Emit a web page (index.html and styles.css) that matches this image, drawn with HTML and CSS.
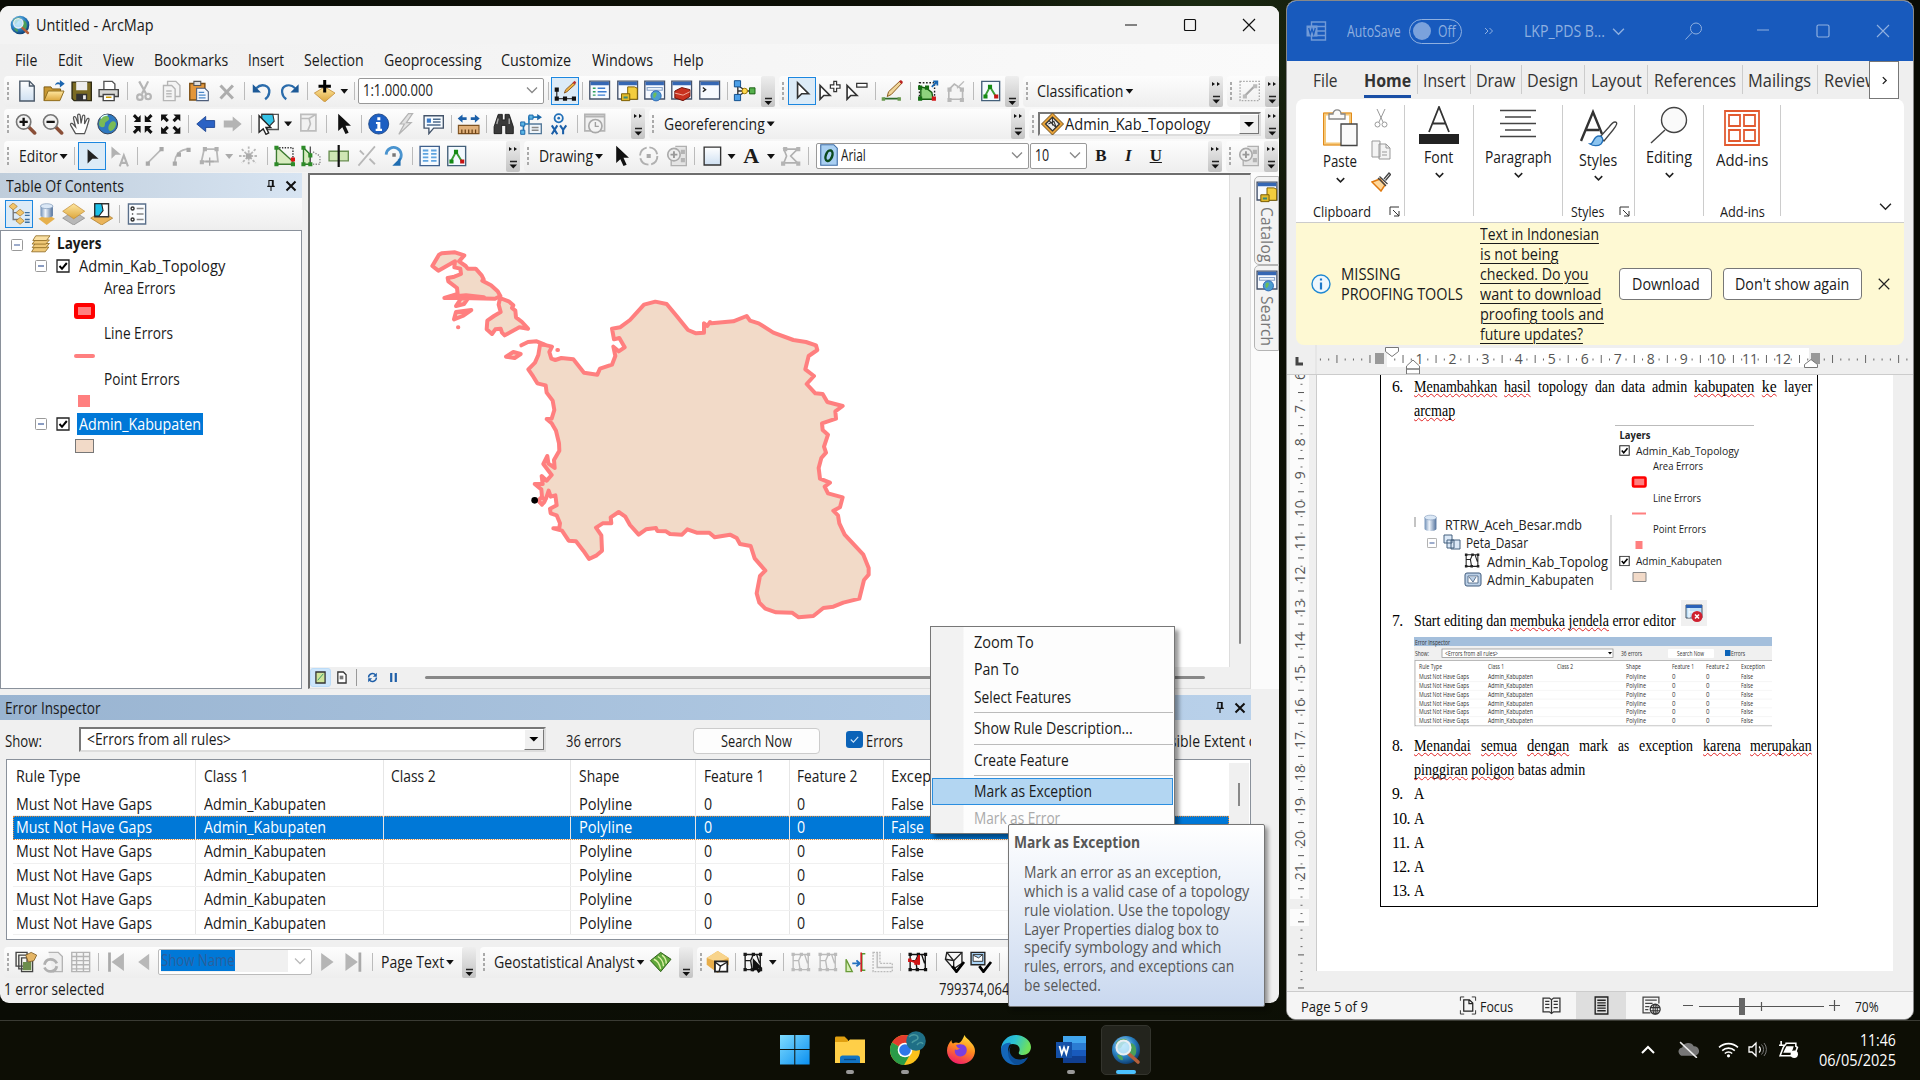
FILE: index.html
```html
<!DOCTYPE html>
<html lang="en">
<head>
<meta charset="utf-8">
<title>Desktop</title>
<link rel="stylesheet" href="styles.css">
</head>
<body>
<svg class="sprite" aria-hidden="true">
<defs>
<linearGradient id="gy" x1="0" y1="0" x2="0" y2="1"><stop offset="0" stop-color="#ffe7a0"/><stop offset="1" stop-color="#dca63c"/></linearGradient>
<linearGradient id="gb" x1="0" y1="0" x2="1" y2="1"><stop offset="0" stop-color="#7fdcff"/><stop offset="1" stop-color="#0a8ff0"/></linearGradient>
<linearGradient id="gw" x1="0" y1="0" x2="0" y2="1"><stop offset="0" stop-color="#fff"/><stop offset="1" stop-color="#cfe0f2"/></linearGradient>
<linearGradient id="gc" x1="0" y1="0" x2="1" y2="0"><stop offset="0" stop-color="#6d8db5"/><stop offset=".4" stop-color="#eef4fb"/><stop offset="1" stop-color="#4f6f9a"/></linearGradient>
<radialGradient id="gl" cx=".4" cy=".35" r=".7"><stop offset="0" stop-color="#cdeeff"/><stop offset=".55" stop-color="#2b83c4"/><stop offset="1" stop-color="#0b3566"/></radialGradient>
<linearGradient id="gf" x1=".7" y1="0" x2=".3" y2="1"><stop offset="0" stop-color="#ffe13a"/><stop offset=".45" stop-color="#ff8a1f"/><stop offset="1" stop-color="#f0196b"/></linearGradient>
<linearGradient id="ge" x1="0" y1="0" x2="1" y2=".3"><stop offset="0" stop-color="#1fa4e0"/><stop offset=".5" stop-color="#2cc3d2"/><stop offset="1" stop-color="#6fe05a"/></linearGradient>
</defs>
<symbol id="new" viewBox="0 0 16 16"><path d="M3 .8h7l3.500 3.500v11H3z" fill="url(#gw)" stroke="#4a5868"/><path d="M10 .8v3.600h3.500" fill="none" stroke="#4a5868"/></symbol>
<symbol id="open" viewBox="0 0 16 16"><path d="M1 15V5h5l1 1.500h6V9" fill="#c79732" stroke="#7c5a12" stroke-width=".7"/><path d="M1 15l3-7h11.500l-3 7z" fill="url(#gy)" stroke="#8d6a1c" stroke-width=".7"/><path d="M9 4c0-2 2-3 3.500-2V0L16 2.800 12.500 5.500v-2C11 3 9.800 3 9 4" fill="#1c66b0"/></symbol>
<symbol id="save" viewBox="0 0 16 16"><path d="M1 1.500h14v13.500H2.500L1 13.500z" fill="#7a6a23" stroke="#2f2b14"/><path d="M4 1.500h8v6H4z" fill="#eee"/><path d="M4 10h8v5H4z" fill="#333"/><path d="M9 11h2v3H9z" fill="#eee"/></symbol>
<symbol id="print" viewBox="0 0 16 16"><path d="M4.500 7V1h6l2 2v4" fill="#fff" stroke="#555"/><path d="M1 7h14v5H1z" fill="#d8d8d4" stroke="#444"/><path d="M4 10.500h8V15H4z" fill="#fff" stroke="#444"/><path d="M6 12.500h4" stroke="#c90"/></symbol>
<symbol id="cut" viewBox="0 0 16 16"><g fill="none" stroke="#b5b5b5" stroke-width="1.600"><path d="M4 1l5 9M10.500 1L6 10"/><circle cx="4.500" cy="12.500" r="2"/><circle cx="10.500" cy="12" r="2"/></g></symbol>
<symbol id="copy" viewBox="0 0 16 16"><g fill="#f4f4f4" stroke="#b5b5b5"><path d="M5 1h6l3 3v8H5z"/><path d="M2 4h6l2.500 2.500V15H2z"/></g><path d="M4 8h4M4 10h4M4 12h4" stroke="#bbb"/></symbol>
<symbol id="paste" viewBox="0 0 16 16"><path d="M1.500 2.500h11v12h-11z" fill="#e3963a" stroke="#7b4d12"/><path d="M4.500 1h5v3h-5z" fill="#ddd" stroke="#555" stroke-width=".8"/><path d="M6.500 6h6L15 8.500V15H6.500z" fill="#f4f8ff" stroke="#4d5d7a" stroke-width=".8"/><path d="M8 9h4M8 11h5M8 13h5" stroke="#4a86c8" stroke-width=".9"/></symbol>
<symbol id="del" viewBox="0 0 16 16"><path d="M3.500 4l9 9.500M12.500 4l-9 9.500" stroke="#adadad" stroke-width="2.200"/></symbol>
<symbol id="undo" viewBox="0 0 16 16"><path d="M4 6c4-4 10-2 9.500 3-.2 2-1 3.500-3 5" fill="none" stroke="#2b6cab" stroke-width="1.700"/><path d="M1.500 3v6h6z" fill="#1d5a98"/></symbol>
<symbol id="redo" viewBox="0 0 16 16"><path d="M12 6c-4-4-10-2-9.500 3 .2 2 1 3.500 3 5" fill="none" stroke="#2b6cab" stroke-width="1.600"/><path d="M14.500 3v6h-6z" fill="#1d5a98"/></symbol>
<symbol id="add" viewBox="0 0 16 16"><path d="M8 5l7.500 4.500L8 16 .5 9.500z" fill="url(#gy)" stroke="#c58f3a" stroke-width=".6"/><path d="M8 0v9M3.500 4.500h9" stroke="#000" stroke-width="2.200"/></symbol>
<symbol id="edit" viewBox="0 0 16 16"><path d="M1.500 7v6.500h12" fill="none" stroke="#444"/><g fill="#111"><path d="M0 5.500h3v3H0zM0 12h3v3H0zM6 12h3v3H6zM12.500 12h3v3h-3z"/></g><path d="M7 9.500l1-2.500 6-5.500 1 1.500-6 5.500z" fill="#f0b440" stroke="#7c4b1b" stroke-width=".6"/><path d="M13 2l1.500-1.500 1.200 1.300-1.500 1.500z" fill="#b33"/></symbol>
<symbol id="win" viewBox="0 0 16 16"><path d="M.8.800h14.400v13H.8z" fill="#f7faff" stroke="#46536b"/><path d="M1.300 1.300h13.400v2.500H1.300z" fill="#3567b4"/></symbol>
<symbol id="toc" viewBox="0 0 16 16"><use href="#win"/><path d="M3 6h2M3 8.500h2M3 11h2" stroke="#2fa060"/><path d="M6.500 6H12M6.500 8.500H13M6.500 11H12" stroke="#3a7bd0"/></symbol>
<symbol id="cat" viewBox="0 0 16 16"><use href="#win"/><path d="M8 5h5l2 1v8H8z" fill="#f3cd3e" stroke="#7a5c00" stroke-width=".7"/><path d="M3.500 10h6v5h-6z" fill="#e0b92b" stroke="#7a5c00" stroke-width=".7"/><path d="M5 12h3v1.500H5z" fill="#3a8a7a"/></symbol>
<symbol id="srch" viewBox="0 0 16 16"><use href="#win"/><path d="M2.500 5.500h11v2h-11z" fill="#eef4fb" stroke="#8aa4c8" stroke-width=".8"/><circle cx="9" cy="11.500" r="3.700" fill="#4b9dd0" stroke="#2e68b5" stroke-width=".7"/><path d="M7 10c2-2 3 0 2 1.500s-1 2-2 1z" fill="#6cbd5a"/></symbol>
<symbol id="tbox" viewBox="0 0 16 16"><use href="#win"/><path d="M3 8l5-2.500 6 1.500v5l-5 3-6-2z" fill="#c8311f" stroke="#6d1209" stroke-width=".7"/><path d="M3 9.500l6 1.500 5-2.500" stroke="#f2b0a0" fill="none" stroke-width=".7"/></symbol>
<symbol id="py" viewBox="0 0 16 16"><use href="#win"/><path d="M3 5.500l2 1.500L3 8.500" fill="none" stroke="#222"/></symbol>
<symbol id="model" viewBox="0 0 16 16"><path d="M3 3v10M3 8h10M3 4l6 4M3 12l6-4" stroke="#333" fill="none"/><path d="M.5.500h4.500V5H.5zM.5 10.500h4.500V15H.5z" fill="#4da0e8" stroke="#114e8a" stroke-width=".7"/><circle cx="8" cy="8" r="2" fill="#ffd94d" stroke="#9a7400" stroke-width=".7"/><path d="M11.500 5.700h4v4.400h-4z" fill="#55b04c" stroke="#1c6016" stroke-width=".7"/></symbol>
<symbol id="arw" viewBox="0 0 16 16"><path d="M5 2v11l3-3h5z" fill="#fff" stroke="#333" stroke-width="1.200"/></symbol>
<symbol id="arwp" viewBox="0 0 16 16"><path d="M1 4v10l2.700-2.700h4.500z" fill="#fff" stroke="#333" stroke-width="1.200"/><path d="M11 1h2v2.500h2.500v2.500H13V8.500h-2V6H8.500V3.500H11z" fill="#fff" stroke="#333" stroke-width=".9"/></symbol>
<symbol id="arwm" viewBox="0 0 16 16"><path d="M1 4v10l2.700-2.700h4.500z" fill="#fff" stroke="#333" stroke-width="1.200"/><path d="M8 2.500h7.500v2.600H8z" fill="#fff" stroke="#333" stroke-width=".9"/></symbol>
<symbol id="pen" viewBox="0 0 16 16"><path d="M1 13.500h12" stroke="#2f6b2c" stroke-width="1.200"/><path d="M4 12l1-3.500 8-7.500 1.500 1.500-7.500 8z" fill="#f0d59a" stroke="#8a5a1b" stroke-width=".7"/><path d="M12.500 1l1.500-1 1.500 1.500-1 1.500z" fill="#b22"/><path d="M0 12.500h2.500v2.500H0zM11.500 12.500H14v2.500h-2.500z" fill="#6a9a50"/></symbol>
<symbol id="topo" viewBox="0 0 16 16"><path d="M2 2h11v12H2z" fill="none" stroke="#222" stroke-dasharray="1.200 1.200"/><path d="M3 5l4 1 4 3 1 5H3z" fill="#8ed27d" stroke="#155c10"/><path d="M1 4h3v3H1zM6 4h3v3H6zM1 12h3v3H1z" fill="#146c12"/><path d="M11 12h3v3h-3z" fill="#d01818"/><path d="M11 5l4-4m-3 0h3v3" stroke="#1564b0" fill="none" stroke-width="1.300"/></symbol>
<symbol id="dtopo" viewBox="0 0 16 16"><path d="M3 14V7l4-4 6 4v7z" fill="#f4f4f4" stroke="#b8b8b8" stroke-width="1.200"/><path d="M9 6l5-5" stroke="#bbb"/><path d="M2 13h3v3H2zM11 13h3v3h-3zM2 5.500h3v3H2zM11 5.500h3v3h-3z" fill="#b8b8b8"/></symbol>
<symbol id="tri" viewBox="0 0 16 16"><path d="M1.500 1h13v14h-13z" fill="#f4faff" stroke="#44607a"/><path d="M4 11.500L7.500 5l4 6.500" fill="none" stroke="#3a9d35" stroke-width="1.400"/><path d="M2.700 10.500h3v3h-3zM6 3.500h3v3H6z" fill="#148a14"/><path d="M10.500 10.500h3v3h-3z" fill="#c81414"/></symbol>
<symbol id="line" viewBox="0 0 16 16"><path d="M3 13L13 3" stroke="#b8b8b8" stroke-width="1.200"/><path d="M1.500 12h3v3h-3zM11.500 1.500h3v3h-3z" fill="#a8a8a8"/></symbol>
<symbol id="dline" viewBox="0 0 16 16"><path d="M1 1h14v14H1z" fill="none" stroke="#aaa" stroke-dasharray="1.200 1"/><path d="M4 12l8-8" stroke="#a8a8a8" stroke-width="1.500"/><path d="M3 10.500h3v3H3zM10.500 3h3v3h-3z" fill="#bbb"/></symbol>
<symbol id="curve" viewBox="0 0 16 16"><path d="M3 13C3 7 7 3 13 3" fill="none" stroke="#b8b8b8" stroke-width="1.200"/><path d="M1.500 12h3v3h-3zM11.500 2h3v3h-3zM4.500 5.500h3v3h-3z" fill="#a8a8a8"/></symbol>
<symbol id="dpoly" viewBox="0 0 16 16"><path d="M4 3h9l1 9H2z" fill="none" stroke="#b8b8b8" stroke-width="1.300"/><path d="M3 1.500h3v3H3zM11.500 1.500h3v3h-3zM.8 11h3v3h-3z" fill="#b0b0b0"/><path d="M8 9v6M5 12h6" stroke="#aaa"/></symbol>
<symbol id="burst" viewBox="0 0 16 16"><path d="M8 1v14M1 8h14M3 3l10 10M13 3L3 13" stroke="#b8b8b8" stroke-width="1.300" stroke-dasharray="1.800 1"/><path d="M6 6h4v4H6z" fill="#aaa"/></symbol>
<symbol id="zin" viewBox="0 0 16 16"><path d="M10 10l4.500 4.500" stroke="#8a4f38" stroke-width="2.600" stroke-linecap="round"/><circle cx="6.500" cy="6.500" r="5.200" fill="#f2f2f2" stroke="#777" stroke-width="1.200"/><path d="M6.500 3.500v6M3.500 6.500h6" stroke="#111" stroke-width="1.700"/></symbol>
<symbol id="zout" viewBox="0 0 16 16"><path d="M10 10l4.500 4.500" stroke="#8a4f38" stroke-width="2.600" stroke-linecap="round"/><circle cx="6.500" cy="6.500" r="5.200" fill="#f2f2f2" stroke="#777" stroke-width="1.200"/><path d="M3.500 6.500h6" stroke="#111" stroke-width="1.700"/></symbol>
<symbol id="hand" viewBox="0 0 16 16"><path d="M5 15L1.500 9c-.8-1.500 1-2 1.800-.8L5 10 3.500 4c-.3-1.600 1.200-2 1.800-.4L7 8 6.500 2c0-1.600 1.700-1.600 1.900 0L9 7.500l1-5c.4-1.500 1.800-1.200 1.700.3L11.500 8l1.700-3.500c.7-1.200 2-.6 1.500.8L13 11l-1.500 4z" fill="#fff" stroke="#555" stroke-width=".9"/></symbol>
<symbol id="globe" viewBox="0 0 16 16"><circle cx="8" cy="8" r="7.200" fill="#2e78c0" stroke="#333f52" stroke-width=".7"/><path d="M4 3c2-2 5-1 5 1S6 6 6 8s-1 3-3 2-1.500-5 1-7M10 7c2-2 4-1 4 1s-2 5-4 5-2-4 0-6" fill="#79bb55"/><path d="M3 4c1-2 3-2.500 5-2.500" stroke="#dff" fill="none"/></symbol>
<symbol id="fin" viewBox="0 0 16 16"><g fill="#111"><path d="M6.500 1.500v5h-5l1.700-1.700L.8 2.400 2.400.8l2.400 2.400zM9.500 1.500v5h5l-1.700-1.700 2.400-2.400L13.600.8l-2.400 2.400zM6.500 14.500v-5h-5l1.700 1.700-2.400 2.400 1.600 1.600 2.400-2.400zM9.500 14.500v-5h5l-1.700 1.700 2.400 2.400-1.600 1.600-2.400-2.400z"/></g></symbol>
<symbol id="fout" viewBox="0 0 16 16"><g fill="#111"><path d="M1 6V1h5L4.300 2.700l2.400 2.400-1.600 1.600-2.400-2.400zM15 6V1h-5l1.700 1.700-2.400 2.400 1.600 1.600 2.400-2.400zM1 10v5h5l-1.700-1.700 2.400-2.400-1.600-1.600-2.400 2.400zM15 10v5h-5l1.700-1.700-2.400-2.400 1.600-1.600 2.400 2.400z"/></g></symbol>
<symbol id="back" viewBox="0 0 16 16"><path d="M1.500 8L8 2.500v3h6.500v5H8v3z" fill="#2b62c4" stroke="#163f8d" stroke-width=".6"/></symbol>
<symbol id="fwd" viewBox="0 0 16 16"><path d="M14.500 8L8 2.500v3H1.500v5H8v3z" fill="#b4b4b4"/></symbol>
<symbol id="selp" viewBox="0 0 16 16"><path d="M3 1h12v11H3z" fill="#fff" stroke="#555"/><path d="M3 1h8l1 5-5 5H3z" fill="#35c3e6" stroke="#333" stroke-width=".8"/><path d="M1 2v12l3-2.500 2 4 2-1-2-4h3.500z" fill="#fff" stroke="#222"/></symbol>
<symbol id="clr" viewBox="0 0 16 16"><path d="M3 1h11v12H3zM3 4h6l1 4-2 5M9 4l5-3" fill="#f2f2f2" stroke="#bdbdbd" stroke-width="1.200"/></symbol>
<symbol id="ptr" viewBox="0 0 16 16"><path d="M4 .5v12.500l3-2.700 2.300 5 2.300-1-2.300-5h4z" fill="#111"/></symbol>
<symbol id="info" viewBox="0 0 16 16"><circle cx="8" cy="8" r="7.300" fill="#1d5fc2" stroke="#153f80" stroke-width=".6"/><path d="M7 3h2.200v2.200H7zM6 6.500h3.200v5h1.200V13H5.800v-1.500H7V8H6z" fill="#fff"/></symbol>
<symbol id="bolt" viewBox="0 0 16 16"><path d="M10 .5L4 8h3l-4 7.500L12 7H8.500L13 .5z" fill="#e2e2e2" stroke="#b4b4b4" stroke-width=".9"/></symbol>
<symbol id="pop" viewBox="0 0 16 16"><path d="M1 2h14v9H8l-3.500 4v-4H1z" fill="#f6fbff" stroke="#44546a"/><path d="M3 4h3v3H3z" fill="#3a7bc8"/><path d="M7.500 4.500H13M7.500 6.500H13M3 8.700h10" stroke="#4d6b8d"/></symbol>
<symbol id="meas" viewBox="0 0 16 16"><path d="M0 4l3.500-3v2h3v2h-3v2zM16 4l-3.500-3v2h-3v2h3v2z" fill="#1b5fa8"/><path d="M.5 9h15v6H.5z" fill="#e0b07a" stroke="#7d5120" stroke-width=".8"/><path d="M3 12v3M5.500 12v3M8 12v3M10.500 12v3M13 12v3" stroke="#6b4216" stroke-width=".9"/></symbol>
<symbol id="bino" viewBox="0 0 16 16"><path d="M4 1h3v4h2V1h3l3 9v5H9.500V9h-3v6H1v-5z" fill="#3a3a3a" stroke="#111" stroke-width=".6"/><path d="M3 8l1-4M12 8V4" stroke="#aaa"/></symbol>
<symbol id="route" viewBox="0 0 16 16"><path d="M2 14V8h4V3h7" fill="none" stroke="#1f7ab8" stroke-width="1.200"/><path d="M12 .8L15.500 3 12 5.200z" fill="#1b66a8"/><path d="M0 6.500h3v3H0zM0 12.500h3v3H0zM6 1.500h3v3H6z" fill="#5bb5e5" stroke="#1b66a8" stroke-width=".7"/><path d="M6 8h9v7H6z" fill="#eef5fb" stroke="#557a9a"/><path d="M8 10.500h5M8 12.500h5" stroke="#888"/></symbol>
<symbol id="xy" viewBox="0 0 16 16"><circle cx="8" cy="3.800" r="3" fill="none" stroke="#2270b8" stroke-width="1.300"/><circle cx="8" cy="3.800" r="1" fill="#2270b8"/><path d="M3 9l4 6.500M7 9l-4 6.500M9 9l2.200 3.200V15.500M13.500 9l-2.300 3.200" stroke="#1b5fa8" stroke-width="1.500" fill="none"/></symbol>
<symbol id="time" viewBox="0 0 16 16"><path d="M.8 1h14.400v12H.8z" fill="#f0f0f0" stroke="#b4b4b4" stroke-width="1.200"/><path d="M1 2.500h14" stroke="#b4b4b4" stroke-width="1.500"/><circle cx="8.500" cy="9.500" r="4.800" fill="#f3f3f3" stroke="#a8a8a8" stroke-width="1.200"/><path d="M8.500 6.500v3.200h2.500" stroke="#a0a0a0" fill="none"/></symbol>
<symbol id="eptr" viewBox="0 0 16 16"><path d="M5 3v10.500l3.500-3.500H13z" fill="#222"/></symbol>
<symbol id="eptra" viewBox="0 0 16 16"><path d="M2 1v9l3-3h4z" fill="#b2b2b2"/><path d="M8 15.500l3-8 3 8M9 13h4" stroke="#b2b2b2" stroke-width="1.500" fill="none"/></symbol>
<symbol id="ev" viewBox="0 0 16 16"><path d="M2 2v12h12V12L3 2z" fill="#d8ecc0" stroke="#3c7a30"/><path d="M4 2h10v9" fill="none" stroke="#333" stroke-dasharray="1 1"/><path d="M.5.500h3v3h-3zM.5 12.500h3v3h-3zM12.500 12.500h3v3h-3z" fill="#2d8a28"/><path d="M12.500 9h3v3h-3z" fill="#d11"/></symbol>
<symbol id="resh" viewBox="0 0 16 16"><path d="M2 2v12h5V7z" fill="#d8ecc0" stroke="#2d7a28"/><path d="M7 1v14" stroke="#555"/><path d="M9 5l5 3v6H9" fill="none" stroke="#888" stroke-dasharray="1 1"/><path d="M.5.500h3v3h-3zM.5 12.500h3v3h-3zM5.500 6h3v3h-3zM5.500 12.500h3v3h-3z" fill="#2d8a28"/></symbol>
<symbol id="split" viewBox="0 0 16 16"><path d="M1 4.500h14v7H1z" fill="#cfe6b4" stroke="#6a8f52"/><path d="M8 0v16" stroke="#111" stroke-width="1.600"/></symbol>
<symbol id="xline" viewBox="0 0 16 16"><path d="M2 15L14 1M3 4l3 3M10 10l4 4" stroke="#b8b8b8" stroke-width="1.300"/></symbol>
<symbol id="rot" viewBox="0 0 16 16"><path d="M2.500 7a5.500 5.500 0 1 1 9 4.500" fill="none" stroke="#4a94cf" stroke-width="2"/><path d="M13 9v6H7z" fill="#1e6cb0"/><path d="M7 6h2.500v2.500H7z" fill="#777"/></symbol>
<symbol id="attr" viewBox="0 0 16 16"><path d="M1 1h14v14H1z" fill="#f5faff" stroke="#3e5f8c"/><path d="M3 4h4M3 6.500h4M3 9h4M3 11.500h4M9 4h4M9 6.500h4M9 9h4M9 11.500h4" stroke="#5fa4e0" stroke-width="1.300"/></symbol>
<symbol id="drot" viewBox="0 0 16 16"><circle cx="8" cy="8" r="6.300" fill="none" stroke="#b0b0b0" stroke-width="1.400" stroke-dasharray="8 2"/><path d="M6.500 6.500h3v3h-3z" fill="#aaa"/></symbol>
<symbol id="dz" viewBox="0 0 16 16"><path d="M7 1h8v14H4V8" fill="#e4e4e4" stroke="#b0b0b0"/><path d="M11 3.500h3v3h-3zM11 9.500h3v3h-3z" fill="#b4b4b4"/><circle cx="6" cy="7" r="4.500" fill="#eee" stroke="#aaa" stroke-width="1.200"/><path d="M6 4.500v5M3.500 7h5" stroke="#999" stroke-width="1.400"/></symbol>
<symbol id="rect" viewBox="0 0 16 16"><path d="M2.500 1.500h12v13h-12z" fill="url(#gw)" stroke="#333"/></symbol>
<symbol id="nodes" viewBox="0 0 16 16"><path d="M3 3h10L8 8l5 5H3l2-5z" fill="none" stroke="#b0b0b0" stroke-width="1.200"/><path d="M2.500 1.500h3v3h-3zM12 1.500h3v3h-3zM12 12h3v3h-3zM1 12h3v3H1z" fill="#b4b4b4"/></symbol>
<symbol id="fontf" viewBox="0 0 16 16"><path d="M2 .5h9.500l2.500 2.500v12.500H2z" fill="#a9cff2" stroke="#3d6ca5" stroke-width=".8"/><ellipse cx="8" cy="8.500" rx="2.300" ry="4" transform="rotate(20 8 8.500)" fill="none" stroke="#0b4a1d" stroke-width="1.800"/></symbol>
<symbol id="topl" viewBox="0 0 16 16"><path d="M8 0l8 8-8 8-8-8z" fill="#e7a238" stroke="#6b4a18" stroke-width=".7"/><path d="M8 3l5 5-5 5-5-5z" fill="#eee" stroke="#333"/><path d="M5.500 5.500l5 5M8 3v6M5 8l4-2 1.500 4" stroke="#333" stroke-width=".8" fill="none"/></symbol>
<symbol id="l1" viewBox="0 0 16 16"><path d="M4 4v8h5M4 7h5" stroke="#777" fill="none"/><path d="M4 0l3 2.500L4 5 1 2.500zM9 4.500l3 2.500-3 2.500L6 7zM9 10.500l3 2.500-3 2.500-3-2.500z" fill="#f1c56b" stroke="#a87824" stroke-width=".5"/><path d="M12.500 7H16M12.500 9H16M12.500 12H16M12.500 14H16" stroke="#3b6fa0"/></symbol>
<symbol id="cyl" viewBox="0 0 16 16"><path d="M3 3v9.500c0 2.500 10 2.500 10 0V3" fill="url(#gc)"/><ellipse cx="8" cy="3" rx="5" ry="2" fill="#dbe8f6" stroke="#7d97b8" stroke-width=".5"/></symbol>
<symbol id="l2" viewBox="0 0 16 16"><path d="M8 8l6 3.500-6 4.500-6-4.500z" fill="#e6b04c"/><path d="M3.500 2v7c0 2 9 2 9 0V2" fill="url(#gc)"/><ellipse cx="8" cy="2.300" rx="4.500" ry="1.800" fill="#dbe8f6" stroke="#7d97b8" stroke-width=".5"/></symbol>
<symbol id="l3" viewBox="0 0 16 16"><path d="M8 6l8 5-8 5-8-5z" fill="#b8b8b8" stroke="#888" stroke-width=".5"/><path d="M8 .5l8 5.500-8 5.500L0 6z" fill="url(#gy)" stroke="#c08b33" stroke-width=".5"/></symbol>
<symbol id="l4" viewBox="0 0 16 16"><path d="M8 6l8 5-8 5-8-5z" fill="#eab45a" stroke="#a87824" stroke-width=".5"/><path d="M3 .5h10v9.500H3z" fill="#fff" stroke="#333"/><path d="M3 .5h5l1 5-3 4H3z" fill="#1bc0e8" stroke="#222" stroke-width=".8"/></symbol>
<symbol id="l5" viewBox="0 0 16 16"><path d="M2 .7h12.500v14.600H2z" fill="#fbfdff" stroke="#5a6f8a"/><circle cx="5" cy="4" r="1.100" fill="none" stroke="#333"/><circle cx="5" cy="8" r=".6" fill="#333"/><circle cx="5" cy="12" r="1.100" fill="none" stroke="#333"/><path d="M8 4h5M8 8h5M8 12h5" stroke="#888"/></symbol>
<symbol id="lay" viewBox="0 0 16 16"><g stroke="#8f6a22" stroke-width=".7" fill="#efc877"><path d="M3 11h12l-3 4H.5z"/><path d="M3.500 8h12l-3 3.500H1z"/><path d="M3.500 5h12l-3 3.500H1z"/><path d="M4 1.500h12l-3 4H1.500z" fill="#f9dfa2"/></g></symbol>
<symbol id="chk" viewBox="0 0 14 14"><path d="M1 1h12v12H1z" fill="#fff" stroke="#222" stroke-width="1.300"/><path d="M3.500 7l2.500 2.800L10.800 4" fill="none" stroke="#000" stroke-width="2"/></symbol>
<symbol id="minus" viewBox="0 0 12 12"><rect x=".5" y=".5" width="11" height="11" rx="1" fill="#fff" stroke="#999"/><path d="M3 6h6" stroke="#3c5a9a" stroke-width="1.200"/></symbol>
<symbol id="pin" viewBox="0 0 12 14"><path d="M3.500 1h5v7h-5zM1.500 8h9M6 8v5.500" fill="none" stroke="#111" stroke-width="1.300"/><path d="M7 1h1.800v7H7z" fill="#111"/></symbol>
<symbol id="x" viewBox="0 0 12 12"><path d="M1.500 1.500l9 9M10.500 1.500l-9 9" stroke="currentColor" stroke-width="var(--sw,1)" fill="none"/></symbol>
<symbol id="ovf" viewBox="0 0 14 30"><path d="M4 22h7" stroke="#222" stroke-width="1.300"/><path d="M3.500 24.500h7.500l-3.700 4z" fill="#111"/></symbol>
<symbol id="ovf2" viewBox="0 0 14 30"><path d="M3 5.500l3 2-3 2zM8 5.500l3 2-3 2z" fill="#111"/><path d="M4 20h7" stroke="#222" stroke-width="1.300"/><path d="M3.500 23h7.500l-3.700 4z" fill="#111"/></symbol>
<symbol id="chev" viewBox="0 0 12 8"><path d="M1 1.500l5 5 5-5" fill="none" stroke="currentColor" stroke-width="var(--cw,1.300)"/></symbol>
<symbol id="pages" viewBox="0 0 16 16"><path d="M1 1h8v10H1zM3 3h8v10H3zM5 5h8v10H5z" fill="#f7f7f0" stroke="#444"/><path d="M6 8h6v6H6z" fill="#6c8d4c"/><path d="M8 3l4-2 4 2-2 4-4 1z" fill="#e4b565" stroke="#7c5a1f" stroke-width=".6"/></symbol>
<symbol id="dref" viewBox="0 0 16 16"><path d="M5 1h7l3 3v11H8" fill="#eee" stroke="#b4b4b4"/><path d="M2 10c1-5 7-5 9-1M11 11c-1 5-7 5-9 1" fill="none" stroke="#b0b0b0" stroke-width="2"/></symbol>
<symbol id="dtab" viewBox="0 0 16 16"><path d="M1.500 1h13v14h-13zM1.500 4h13M1.500 7h13M1.500 10h13M1.500 13h13M5 1v14M10 1v14" fill="#f4f4f4" stroke="#b4b4b4"/></symbol>
<symbol id="first" viewBox="0 0 16 16"><path d="M14 1.500v13L5 8z" fill="#b5b5b5"/><path d="M3.500 1v14" stroke="#aaa" stroke-width="2"/></symbol>
<symbol id="prev" viewBox="0 0 16 16"><path d="M12 2v12L4 8z" fill="#b8b8b8"/></symbol>
<symbol id="next" viewBox="0 0 16 16"><path d="M4 1.500v13L13 8z" fill="#b5b5b5"/></symbol>
<symbol id="last" viewBox="0 0 16 16"><path d="M2 1.500v13L11 8z" fill="#b5b5b5"/><path d="M12.500 1v14" stroke="#aaa" stroke-width="2"/></symbol>
<symbol id="geo" viewBox="0 0 16 16"><path d="M.5 7L8 1l7.500 5L8 15z" fill="#5fa83a" stroke="#2a5c14" stroke-width=".7"/><path d="M3 6c3 1 4 3 5 7M6 4c3 2 4 4 4 7M9 3c3 2 3 4 3 6" stroke="#dff0a8" fill="none"/></symbol>
<symbol id="thome" viewBox="0 0 16 16"><path d="M8 0l8 5v5l-8 6-8-6V5z" fill="#e8ae4a"/><path d="M0 5l8-5 8 5-8 3z" fill="#f8d48c"/><path d="M6 7.500h9V15H6z" fill="#fff" stroke="#222" stroke-width="1.300"/><path d="M6 8l4 3 5-3M10 11l-1 4" stroke="#222" fill="none"/></symbol>
<symbol id="net" viewBox="0 0 16 16"><path d="M2.500 2.500h11v11h-11zM2.500 7h4l2-4.500M6.500 7l1 6M11 3l2 6" fill="none" stroke="currentColor"/><path d="M1.300 1.300h2.400v2.400H1.300zM7.300 1.300h2.400v2.400H7.300zM12.500 1.300h2.400v2.400h-2.400zM1.300 12.300h2.400v2.400H1.300zM6.500 12.300h2.400v2.400H6.500zM12.500 12.300h2.400v2.400h-2.400z" fill="currentColor"/></symbol>
<symbol id="neterr" viewBox="0 0 16 16"><use href="#net"/><path d="M3 7l4 1.500L9 3v7" stroke="#d01515" stroke-width="1.400" fill="none"/><path d="M5.500 6.500h3.500v3.500H5.500zM1 5.500h2.500V8H1z" fill="#d01515"/></symbol>
<symbol id="tsel" viewBox="0 0 16 16"><use href="#net"/><path d="M8 5v10l2.500-2 1.500 3 1.700-.9-1.500-2.800H15z" fill="#111"/></symbol>
<symbol id="align" viewBox="0 0 16 16"><path d="M1 6v9h4.500z" fill="#d6efb4" stroke="#6a9c3a"/><path d="M5.500 9h5M8.500 6.800l2.500 2.200-2.500 2.200" stroke="#2270c0" fill="none" stroke-width="1.400"/><path d="M15 2h-2.500v12H15" fill="none" stroke="#5a9a30"/><path d="M12 1v14" stroke="#c22" stroke-width="1.200"/></symbol>
<symbol id="lsh" viewBox="0 0 16 16"><path d="M1 1h5v8h9v6H1z" fill="#f4f4f4" stroke="#bbb" stroke-dasharray="1.400 .8"/><path d="M4 1v11h11" fill="none" stroke="#bbb"/></symbol>
<symbol id="val" viewBox="0 0 16 16"><path d="M3 1h11v8L8 13 2 6z" fill="#f6f6f6" stroke="#222"/><path d="M3 1l5 6 6-6M2 6l6 1v6" fill="none" stroke="#222"/><path d="M7 11l3 4 5.500-7" stroke="#000" stroke-width="2" fill="none"/></symbol>
<symbol id="val2" viewBox="0 0 16 16"><path d="M1 1h10v9H1z" fill="#a9d3f5" stroke="#222"/><path d="M2.500 2.500h7v5h-7zM2.500 3l4 2 3-2.500" fill="#fff" stroke="#333" stroke-width=".7"/><path d="M7 11l3 4 5.500-7" stroke="#000" stroke-width="2" fill="none"/></symbol>
<symbol id="arc" viewBox="0 0 30 30"><circle cx="15" cy="15" r="14" fill="url(#gl)"/><path d="M5 8c4-5 9-5 11-3s-4 3-5 6-4 3-6 2M20 8c4 1 6 5 5 10s-5 4-6 0M6 20c3-1 6 1 6 4s-5 0-6-4" fill="#4aa05a"/><path d="M18 19l9 8" stroke="#b5603a" stroke-width="3.600" stroke-linecap="round"/><circle cx="12.500" cy="12.500" r="7" fill="#bfe8fa" fill-opacity=".85" stroke="#e9eef2" stroke-width="2"/></symbol>
</svg>

<main class="desktop">
<section class="arcmap window">
  <header class="titlebar">
    <svg class="app"><use href="#arc"/></svg><span data-w="118">Untitled - ArcMap</span>
    <div class="winbtns">
      <svg viewBox="0 0 14 14"><path d="M1 7h12" stroke="#111"/></svg>
      <svg viewBox="0 0 14 14"><rect x="1.500" y="1.500" width="11" height="11" rx="1" fill="none" stroke="#111" stroke-width="1.200"/></svg>
      <svg viewBox="0 0 14 14"><path d="M1 1l12 12M13 1L1 13" stroke="#111" stroke-width="1.200"/></svg>
    </div>
  </header>
  <nav class="menu"><span data-w="22">File</span><span data-w="24">Edit</span><span data-w="31">View</span><span data-w="74">Bookmarks</span><span data-w="36">Insert</span><span data-w="60">Selection</span><span data-w="98">Geoprocessing</span><span data-w="70">Customize</span><span data-w="61">Windows</span><span data-w="31">Help</span></nav>

  <div class="bars">
    <div class="barrow">
      <div class="tb t-std"><i class="gr"></i><svg class="i"><use href="#new"/></svg><svg class="i"><use href="#open"/></svg><svg class="i"><use href="#save"/></svg><svg class="i"><use href="#print"/></svg><i class="sp"></i><svg class="i"><use href="#cut"/></svg><svg class="i"><use href="#copy"/></svg><svg class="i"><use href="#paste"/></svg><svg class="i"><use href="#del"/></svg><i class="sp"></i><svg class="i"><use href="#undo"/></svg><svg class="i"><use href="#redo"/></svg><i class="sp"></i><svg class="i"><use href="#add"/></svg><i class="ca"></i><i class="sp"></i>
        <div class="combo scale"><span data-w="70">1:1.000.000</span><svg class="cv"><use href="#chev"/></svg></div>
        <i class="sp"></i><span class="on"><svg class="i"><use href="#edit"/></svg></span><i class="sp"></i><svg class="i"><use href="#toc"/></svg><svg class="i"><use href="#cat"/></svg><svg class="i"><use href="#srch"/></svg><svg class="i"><use href="#tbox"/></svg><svg class="i"><use href="#py"/></svg><i class="sp"></i><svg class="i"><use href="#model"/></svg><i class="g"></i><svg class="ov"><use href="#ovf"/></svg></div>
      <div class="tb t-edit"><i class="gr"></i><span class="on"><svg class="i"><use href="#arw"/></svg></span><svg class="i"><use href="#arwp"/></svg><svg class="i"><use href="#arwm"/></svg><i class="sp"></i><svg class="i"><use href="#pen"/></svg><i class="sp"></i><svg class="i"><use href="#topo"/></svg><svg class="i"><use href="#dtopo"/></svg><i class="sp"></i><svg class="i"><use href="#tri"/></svg><i class="g"></i><svg class="ov"><use href="#ovf"/></svg></div>
      <div class="tb t-class"><i class="gr"></i><span class="lb" data-w="86">Classification</span><i class="ca"></i><i class="g"></i><svg class="ov"><use href="#ovf2"/></svg></div>
      <div class="tb t-end"><i class="gr"></i><svg class="i"><use href="#dline"/></svg><i class="g"></i><svg class="ov"><use href="#ovf2"/></svg></div>
    </div>
    <div class="barrow">
      <div class="tb t-tools"><i class="gr"></i><svg class="i"><use href="#zin"/></svg><svg class="i"><use href="#zout"/></svg><svg class="i"><use href="#hand"/></svg><svg class="i"><use href="#globe"/></svg><i class="sp"></i><svg class="i"><use href="#fin"/></svg><svg class="i"><use href="#fout"/></svg><i class="sp"></i><svg class="i"><use href="#back"/></svg><svg class="i"><use href="#fwd"/></svg><i class="sp"></i><svg class="i"><use href="#selp"/></svg><i class="ca"></i><svg class="i"><use href="#clr"/></svg><i class="sp"></i><svg class="i"><use href="#ptr"/></svg><i class="sp"></i><svg class="i"><use href="#info"/></svg><svg class="i"><use href="#bolt"/></svg><svg class="i"><use href="#pop"/></svg><i class="sp"></i><svg class="i"><use href="#meas"/></svg><i class="sp"></i><svg class="i"><use href="#bino"/></svg><svg class="i"><use href="#route"/></svg><svg class="i"><use href="#xy"/></svg><i class="sp"></i><svg class="i"><use href="#time"/></svg><i class="g"></i><svg class="ov"><use href="#ovf2"/></svg></div>
      <div class="tb t-geo"><i class="gr"></i><span class="lb" data-w="101">Georeferencing</span><i class="ca"></i><i class="g"></i><svg class="ov"><use href="#ovf2"/></svg></div>
      <div class="tb t-topo"><i class="gr"></i><div class="classic"><svg class="i"><use href="#topl"/></svg><span data-w="145">Admin_Kab_Topology</span><b></b></div><i class="g"></i><svg class="ov"><use href="#ovf2"/></svg></div>
    </div>
    <div class="barrow">
      <div class="tb t-editor"><i class="gr"></i><span class="lb" data-w="39">Editor</span><i class="ca"></i><i class="sp"></i><span class="on"><svg class="i"><use href="#eptr"/></svg></span><svg class="i"><use href="#eptra"/></svg><i class="sp"></i><svg class="i"><use href="#line"/></svg><svg class="i"><use href="#curve"/></svg><svg class="i"><use href="#dpoly"/></svg><i class="ca off"></i><svg class="i"><use href="#burst"/></svg><i class="sp"></i><svg class="i"><use href="#ev"/></svg><svg class="i"><use href="#resh"/></svg><svg class="i"><use href="#split"/></svg><svg class="i"><use href="#xline"/></svg><svg class="i"><use href="#rot"/></svg><i class="sp"></i><svg class="i"><use href="#attr"/></svg><svg class="i"><use href="#tri"/></svg><i class="g"></i><svg class="ov"><use href="#ovf2"/></svg></div>
      <div class="tb t-draw"><i class="gr"></i><span class="lb" data-w="54">Drawing</span><i class="ca"></i><svg class="i nudge"><use href="#ptr"/></svg><svg class="i"><use href="#drot"/></svg><svg class="i"><use href="#dz"/></svg><i class="sp"></i><svg class="i"><use href="#rect"/></svg><i class="ca"></i><span class="i serif">A</span><i class="ca"></i><svg class="i"><use href="#nodes"/></svg><i class="sp"></i>
        <div class="combo font"><svg class="i"><use href="#fontf"/></svg><span data-w="25">Arial</span><svg class="cv"><use href="#chev"/></svg></div>
        <div class="combo size"><span data-w="14">10</span><svg class="cv"><use href="#chev"/></svg></div>
        <span class="i biu">B</span><span class="i biu it">I</span><span class="i biu un">U</span><i class="g"></i><svg class="ov"><use href="#ovf2"/></svg></div>
      <div class="tb t-end"><i class="gr"></i><svg class="i"><use href="#dz"/></svg><i class="g"></i><svg class="ov"><use href="#ovf2"/></svg></div>
    </div>
  </div>

  <div class="work">
    <aside class="toc">
      <header><span data-w="118">Table Of Contents</span><svg class="pn"><use href="#pin"/></svg><svg class="px"><use href="#x"/></svg></header>
      <div class="toctools"><span class="on"><svg class="i"><use href="#l1"/></svg></span><svg class="i"><use href="#l2"/></svg><svg class="i"><use href="#l3"/></svg><svg class="i"><use href="#l4"/></svg><i class="sp"></i><svg class="i"><use href="#l5"/></svg></div>
      <ul class="tree">
        <li class="d0"><svg class="mn"><use href="#minus"/></svg><svg class="ly"><use href="#lay"/></svg><b data-w="44">Layers</b></li>
        <li class="d1"><svg class="mn"><use href="#minus"/></svg><svg class="ck"><use href="#chk"/></svg><span class="nm" data-w="146">Admin_Kab_Topology</span></li>
        <li class="d3"><span data-w="71">Area Errors</span></li>
        <li class="d2"><i class="sw area"></i></li>
        <li class="d3"><span data-w="69">Line Errors</span></li>
        <li class="d2"><i class="sw ln"></i></li>
        <li class="d3"><span data-w="76">Point Errors</span></li>
        <li class="d2"><i class="sw pt"></i></li>
        <li class="d1"><svg class="mn"><use href="#minus"/></svg><svg class="ck"><use href="#chk"/></svg><span class="nm sel"><span data-w="122">Admin_Kabupaten</span></span></li>
        <li class="d2"><i class="sw poly"></i></li>
      </ul>
    </aside>
    <div class="mapframe">
      <div class="mapmid">
        <svg class="map" viewBox="310 175 919 492" width="919" height="492">
          <g transform="translate(400 230) scale(.33333)" fill="#f2dac8" stroke="#ff7f7f" stroke-width="12" stroke-linejoin="round" stroke-linecap="round">
            <path d="M420 345L415 375 405 398 385 418 400 440 412 460 437 466 440 488 458 512 463 540 455 566 440 567 455 580 468 602 477 640 478 662 462 690 464 714 445 700 442 678 430 702 455 735 440 752 425 738 428 762 404 762 424 778 426 800 416 812 426 824 438 806 446 782 452 800 466 796 470 826 450 836 452 850 470 856 480 880 478 894 460 895 486 902 506 932 528 934 550 962 567 987 590 976 606 962 604 916 588 893 608 880 634 880 632 862 656 846 676 860 690 885 716 914 738 898 768 894 772 903 798 904 810 912 846 914 862 898 890 908 928 908 944 922 990 914 1010 924 1020 942 1052 948 1064 985 1096 1022 1080 1038 1070 1090 1078 1118 1096 1136 1128 1147 1176 1148 1196 1162 1240 1158 1270 1134 1300 1130 1330 1118 1378 1106 1392 1050 1406 1034 1406 1014 1390 974 1334 914 1318 880 1314 856 1300 842 1320 832 1328 802 1284 790 1274 770 1290 758 1260 746 1256 714 1264 684 1278 668 1272 650 1284 614 1268 600 1266 580 1308 566 1306 544 1328 528 1282 516 1268 492 1246 490 1220 462 1242 438 1216 418 1226 378 1252 360 1248 346 1218 336 1180 330 1120 308 1076 280 1050 272 1040 258 1000 274 934 280 930 276 922 288 912 280 912 308 888 310 864 300 830 258 800 222 766 215 732 224 690 270 660 292 636 296 642 328 658 324 674 352 656 364 640 350 646 378 636 404 600 416 592 434 552 428 520 388 484 384 466 390 454 386 448 366 456 350 430 344z"/>
            <path d="M97 108l20-34 8-4 40-3 28 9-16 18 20 14 6 8 24 0 18 20 6 12-4 4 26 14 20 18 8 14-16 8-100-2-14 0-38 0 40-12-2-18-26-20-2-10 20-4 20-8-2-16-18-4 2-18-50 28z"/>
            <path d="M300 204l26 10 14 12-4 8 10 8 2 20 18 14 18 20-26-4-44 24-8-8-4-12-16 2-10 14-16-14 2-26 20-14 20-12-6-22z"/>
            <path d="M184 204l18 4-10 14-24 6zM162 268l6-22 46-6-26 18z"/>
            <path d="M174 292h1M174 198l24-2 54 6" fill="none"/>
            <path d="M318 380l22-14 22 6-18 12z"/><path d="M364 346l20-10 26-2 24 10" fill="none"/><path d="M472 360h2" fill="none"/>
            <circle cx="426" cy="812" r="8"/>
            <circle cx="404" cy="811" r="10" fill="#000" stroke="none"/>
          </g>
        </svg>
        <div class="vs"><i></i></div>
      </div>
      <div class="mapfoot"><span class="vb on"><svg viewBox="0 0 12 14"><path d="M1 1h10v12H1z" fill="#cfe59a" stroke="#333" stroke-width="1.400"/><path d="M3 10l6-7" stroke="#396"/></svg></span><span class="vb"><svg viewBox="0 0 12 14"><path d="M2 1h6l3 3v9H2z" fill="#fff" stroke="#333" stroke-width="1.400"/><path d="M4 5h4v4H4z" fill="#777"/></svg></span><i class="fsep"></i><span class="vb"><svg viewBox="0 0 14 14"><path d="M2 7a5 5 0 0 1 9-3M12 7a5 5 0 0 1-9 3" fill="none" stroke="#1f5fa8" stroke-width="1.800"/><path d="M12.500 1v5h-5zM1.500 13V8h5z" fill="#1f5fa8"/></svg></span><span class="vb"><svg viewBox="0 0 12 12"><path d="M3.500 1v10M8.500 1v10" stroke="#1f5fa8" stroke-width="2.400"/></svg></span><i class="hs"></i></div>
    </div>
    <aside class="dock"><div class="dt"><svg class="i"><use href="#cat"/></svg><span>Catalog</span></div><div class="dt"><svg class="i"><use href="#srch"/></svg><span>Search</span></div></aside>
  </div>

  <section class="inspector">
    <header><span data-w="96">Error Inspector</span><svg class="pn"><use href="#pin"/></svg><svg class="px"><use href="#x"/></svg></header>
    <div class="showrow">
      <span class="show" data-w="37">Show:</span>
      <div class="classic"><span data-w="144">&lt;Errors from all rules&gt;</span><b></b></div>
      <span class="cnt" data-w="55">36 errors</span>
      <span class="btn"><span data-w="71">Search Now</span></span>
      <svg class="cb" viewBox="0 0 16 16"><rect width="16" height="16" rx="3" fill="#0b63b8"/><path d="M4.500 8l2.500 2.500 4.500-5" fill="none" stroke="#cfe6fa"/></svg>
      <span data-w="37">Errors</span>
      <span class="ext" data-w="118">Visible Extent only</span>
    </div>
    <div class="gridbox">
      <div class="tbl">
        <div class="row hd"><span><span data-w="64">Rule Type</span></span><span><span data-w="45">Class 1</span></span><span><span data-w="45">Class 2</span></span><span><span data-w="40">Shape</span></span><span><span data-w="60">Feature 1</span></span><span><span data-w="60">Feature 2</span></span><span><span data-w="67">Exception</span></span></div>
        <div class="row"><span><span data-w="136">Must Not Have Gaps</span></span><span><span data-w="122">Admin_Kabupaten</span></span><span></span><span><span data-w="53">Polyline</span></span><span><span data-w="8">0</span></span><span><span data-w="8">0</span></span><span><span data-w="33">False</span></span></div>
        <div class="row pick"><span><span data-w="136">Must Not Have Gaps</span></span><span><span data-w="122">Admin_Kabupaten</span></span><span></span><span><span data-w="53">Polyline</span></span><span><span data-w="8">0</span></span><span><span data-w="8">0</span></span><span><span data-w="33">False</span></span></div>
        <div class="row"><span><span data-w="136">Must Not Have Gaps</span></span><span><span data-w="122">Admin_Kabupaten</span></span><span></span><span><span data-w="53">Polyline</span></span><span><span data-w="8">0</span></span><span><span data-w="8">0</span></span><span><span data-w="33">False</span></span></div>
        <div class="row"><span><span data-w="136">Must Not Have Gaps</span></span><span><span data-w="122">Admin_Kabupaten</span></span><span></span><span><span data-w="53">Polyline</span></span><span><span data-w="8">0</span></span><span><span data-w="8">0</span></span><span><span data-w="33">False</span></span></div>
        <div class="row"><span><span data-w="136">Must Not Have Gaps</span></span><span><span data-w="122">Admin_Kabupaten</span></span><span></span><span><span data-w="53">Polyline</span></span><span><span data-w="8">0</span></span><span><span data-w="8">0</span></span><span><span data-w="33">False</span></span></div>
        <div class="row"><span><span data-w="136">Must Not Have Gaps</span></span><span><span data-w="122">Admin_Kabupaten</span></span><span></span><span><span data-w="53">Polyline</span></span><span><span data-w="8">0</span></span><span><span data-w="8">0</span></span><span><span data-w="33">False</span></span></div>
      </div>
      <div class="gs"><i></i></div>
    </div>
  </section>

  <div class="barrow low">
    <div class="tb t-page"><i class="gr"></i><svg class="i"><use href="#pages"/></svg><svg class="i"><use href="#dref"/></svg><svg class="i"><use href="#dtab"/></svg><i class="sp"></i><svg class="i"><use href="#first"/></svg><svg class="i"><use href="#prev"/></svg><div class="combo name"><em><span data-w="74">Show Name</span></em><svg class="cv"><use href="#chev"/></svg></div><svg class="i"><use href="#next"/></svg><svg class="i"><use href="#last"/></svg><i class="sp"></i><span class="lb" data-w="63">Page Text</span><i class="ca"></i><i class="g"></i><svg class="ov"><use href="#ovf"/></svg></div>
    <div class="tb t-ga"><i class="gr"></i><span class="lb" data-w="141">Geostatistical Analyst</span><i class="ca"></i><svg class="i"><use href="#geo"/></svg><i class="g"></i><svg class="ov"><use href="#ovf"/></svg></div>
    <div class="tb t-top2"><i class="gr"></i><svg class="i"><use href="#thome"/></svg><i class="sp"></i><svg class="i"><use href="#tsel"/></svg><i class="ca"></i><i class="sp"></i><svg class="i dim"><use href="#net"/></svg><svg class="i dim"><use href="#net"/></svg><svg class="i"><use href="#align"/></svg><svg class="i"><use href="#lsh"/></svg><i class="sp"></i><svg class="i err"><use href="#neterr"/></svg><i class="sp"></i><svg class="i"><use href="#val"/></svg><svg class="i"><use href="#val2"/></svg><i class="sp"></i></div>
  </div>
  <footer class="status"><span data-w="100">1 error selected</span><span class="coord" data-w="70">799374,064</span></footer>
</section>

<ul class="ctx">
  <li><span data-w="60">Zoom To</span></li><li><span data-w="45">Pan To</span></li><li><span data-w="97">Select Features</span></li><li class="hr"></li><li><span data-w="159">Show Rule Description...</span></li><li class="hr"></li><li><span data-w="95">Create Feature</span></li><li class="hr"></li><li class="hot"><span data-w="118">Mark as Exception</span></li><li class="dis"><span data-w="86">Mark as Error</span></li>
</ul>
<div class="tip"><h4><span data-w="126">Mark as Exception</span></h4><p><span data-w="197">Mark an error as an exception,</span><br><span data-w="225">which is a valid case of a topology</span><br><span data-w="206">rule violation. Use the topology</span><br><span data-w="195">Layer Properties dialog box to</span><br><span data-w="197">specify symbology and which</span><br><span data-w="210">rules, errors, and exceptions can</span><br><span data-w="77">be selected.</span></p></div>

<section class="word window">
  <header class="wtitle">
    <svg class="wi" viewBox="0 0 20 20"><path d="M5 1h14v18H5zM5 5.500h14M5 10h14M5 14.500h14" fill="none" stroke="currentColor" stroke-width="1.400"/><path d="M0 4.500h11v11H0z" fill="currentColor"/><path d="M2.200 7l1.600 6L5.500 8l1.700 5L8.800 7" fill="none" stroke="#185abd" stroke-width="1.300"/></svg>
    <span class="as" data-w="54">AutoSave</span><span class="tog"><i></i><span data-w="18">Off</span></span>
    <svg class="qq" viewBox="0 0 10 8"><path d="M1 1l3 3-3 3M5.500 1l3 3-3 3" fill="none" stroke="currentColor"/></svg>
    <span class="dn" data-w="81">LKP_PDS B...</span><svg class="dc"><use href="#chev"/></svg>
    <svg class="sr" viewBox="0 0 18 18"><circle cx="11" cy="6.500" r="5.500" fill="none" stroke="currentColor"/><path d="M7 10.500L.5 17.500" stroke="currentColor"/></svg>
    <svg class="wb" viewBox="0 0 14 14"><path d="M1 6h12" stroke="currentColor" stroke-width="1.200"/></svg>
    <svg class="wb" viewBox="0 0 14 14"><rect x="1" y="1" width="12" height="12" rx="1.500" fill="none" stroke="currentColor" stroke-width="1.200"/></svg>
    <svg class="wb" viewBox="0 0 14 14"><path d="M1 1l12 12M13 1L1 13" stroke="currentColor" stroke-width="1.100"/></svg>
  </header>
  <nav class="tabs"><span class="file"><span data-w="25">File</span></span><span class="cur"><b data-w="47">Home</b></span><span class="w54"><span data-w="43">Insert</span></span><span class="w51"><span data-w="39">Draw</span></span><span class="w63"><span data-w="51">Design</span></span><span class="w63"><span data-w="51">Layout</span></span><span class="w95"><span data-w="82">References</span></span><span class="w75"><span data-w="63">Mailings</span></span><span class="w52"><span data-w="54">Review</span></span><span class="more"><svg viewBox="0 0 8 8"><path d="M2.500 1l3 3-3 3" fill="none" stroke="#222" stroke-width="1.200"/></svg></span></nav>
  <div class="ribbon">
    <div class="grp clip">
      <div class="two"><div class="big"><svg viewBox="0 0 35 38" width="35" height="38"><path d="M1.500 5h26v30h-26z" fill="#fff" stroke="#f6c878" stroke-width="3"/><path d="M.5 4h28v32h-28z" fill="none" stroke="#e08a1a"/><path d="M6 10V5h4c0-5.500 8-5.500 8 0h4v5z" fill="#fafafa" stroke="#888" stroke-width="1.300"/><path d="M18 15h16v21.500H18z" fill="#fafafa" stroke="#444" stroke-width="1.300"/></svg><span data-w="34">Paste</span><svg class="c"><use href="#chev"/></svg></div>
      <div class="mini"><svg viewBox="0 0 14 20"><path d="M3 1l6 13M11 1L5 14" stroke="#999" fill="none"/><circle cx="3.500" cy="16.500" r="2.500" fill="none" stroke="#999"/><circle cx="10.500" cy="16.500" r="2.500" fill="none" stroke="#999"/></svg><svg viewBox="0 0 20 20"><path d="M1 1h8v16H1zM8 4h7l4 4v11H8z" fill="#f4f4f4" stroke="#999"/><path d="M11 12h5M11 15h5M15 4v4h4" stroke="#999" fill="none"/></svg><svg viewBox="0 0 20 20"><path d="M1 10l8-3 5 6-4 6z" fill="#ffd79a" stroke="#e07a10" stroke-width="1.500"/><path d="M7 6l8 8M8.500 4.500l8 7.500M13 7l5-6 1.500 1.500-5 6" fill="#fff" stroke="#444" stroke-width="1.300"/></svg></div></div>
      <footer><span data-w="58">Clipboard</span><svg class="la" viewBox="0 0 11 11"><path d="M1 9V1h9M4 4l6 6M10 5v5H5" fill="none" stroke="#333"/></svg></footer>
    </div>
    <div class="grp g69"><div class="big"><svg viewBox="0 0 40 38" width="40" height="38"><path d="M10 26L20 1l10 25M13.500 17.500h13" fill="none" stroke="#333" stroke-width="1.800"/><path d="M0 28h40v10H0z" fill="#222"/></svg><span data-w="29">Font</span><svg class="c"><use href="#chev"/></svg></div></div>
    <div class="grp g89"><div class="big"><svg viewBox="0 0 36 38" width="36" height="38"><path d="M0 4.500h36M5 11h26M0 17.500h36M5 24h26M0 30.500h36" stroke="#444" stroke-width="1.300"/></svg><span data-w="67">Paragraph</span><svg class="c"><use href="#chev"/></svg></div></div>
    <div class="grp g73"><div class="big lo"><svg viewBox="0 0 38 38" width="38" height="38"><path d="M1 32L13 3l9 22M6 21h13" fill="none" stroke="#333" stroke-width="2.400"/><path d="M35 13c3 0 2 3-2 8l-9 11-4-4 9-10c3-4 5-5 6-5z" fill="#fff" stroke="#444" stroke-width="1.300"/><path d="M10 35c4 0 3-8 9-8 4 0 5 5 2 8-3 2.500-8 2-11 0z" fill="#8cc4ef" stroke="#2470b8" stroke-width="1.300"/></svg><span data-w="38">Styles</span><svg class="c"><use href="#chev"/></svg></div><footer><span data-w="33">Styles</span><svg class="la" viewBox="0 0 11 11"><path d="M1 9V1h9M4 4l6 6M10 5v5H5" fill="none" stroke="#333"/></svg></footer></div>
    <div class="grp g68"><div class="big"><svg viewBox="0 0 38 38" width="38" height="38"><circle cx="24" cy="14" r="12.500" fill="#fafafa" stroke="#444" stroke-width="1.400"/><path d="M15 24L1 37" stroke="#444" stroke-width="1.400"/></svg><span data-w="46">Editing</span><svg class="c"><use href="#chev"/></svg></div></div>
    <div class="grp g77"><div class="big lo"><svg viewBox="0 0 36 38" width="36" height="38"><g fill="none" stroke="#e25a30" stroke-width="1.800"><path d="M1 2h34v34H1zM5 6h11v11H5zM20 6h11v11H20zM5 21h11v11H5zM20 21h11v11H20z"/></g></svg><span data-w="52">Add-ins</span></div><footer><span data-w="45">Add-ins</span></footer></div>
    <svg class="fold"><use href="#chev"/></svg>
  </div>
  <div class="msg">
    <svg class="inf" viewBox="0 0 20 20"><circle cx="10" cy="10" r="9" fill="#eef7fd" stroke="#1e88d2" stroke-width="1.400"/><path d="M10 4.500v2M10 8.500v7" stroke="#1e78c8" stroke-width="2.200"/></svg>
    <div class="mt"><span data-w="60">MISSING</span><br><span data-w="122">PROOFING TOOLS</span></div>
    <div class="ml"><u data-w="119">Text in Indonesian</u><br><u data-w="78">is not being</u><br><u data-w="109">checked. Do you</u><br><u data-w="121">want to download</u><br><u data-w="124">proofing tools and</u><br><u data-w="103">future updates?</u></div>
    <span class="mb m1"><span data-w="68">Download</span></span><span class="mb m2"><span data-w="114">Don't show again</span></span>
    <svg class="mx"><use href="#x"/></svg>
  </div>
  <svg class="ruler" id="hruler" viewBox="1287 345 626 29" width="626" height="29"></svg>
  <div class="docarea">
    <svg class="vruler" id="vruler" viewBox="1287 375 29 617" width="29" height="617"></svg>
    <div class="page">
      <div class="cell">
        <div class="ln"><b>6.</b><div class="just"><u data-w="83">Menambahkan</u><u data-w="27">hasil</u><span data-w="50">topology</span><span data-w="20">dan</span><span data-w="24">data</span><span data-w="35">admin</span><u data-w="60">kabupaten</u><u data-w="15">ke</u><span data-w="28">layer</span></div></div>
        <div class="ln"><b></b><u data-w="41">arcmap</u></div>
        <svg class="pic p1" viewBox="1414 425 400 170" width="400" height="170">
          <path d="M1615 426.500h139" stroke="#bbb"/>
          <path d="M1415 518v10" stroke="#888"/><path d="M1611 516v75" stroke="#ddd" stroke-width="2"/>
          <svg x="1420" y="515" width="21" height="19"><use href="#cyl"/></svg>
          <svg x="1427" y="539" width="10" height="10"><use href="#minus"/></svg>
          <path d="M1444 536h8v8h-8zM1451 541h9v9h-9zM1447 541h7v8h-7z" fill="#dce9f7" stroke="#44607f"/>
          <svg x="1463" y="553" width="18" height="17" color="#222"><use href="#net"/></svg>
          <rect x="1465" y="574" width="16" height="13" rx="2" fill="#bcd0e6" stroke="#3f5a7c"/><path d="M1468 577h10v7h-10zM1469 578l4 5 3-5" fill="#fff" stroke="#3f5a7c" stroke-width=".8"/>
          <g class="t16"><text x="1445" y="530.500" textLength="137">RTRW_Aceh_Besar.mdb</text><text x="1466" y="549" textLength="62">Peta_Dasar</text><text x="1487" y="567.500" textLength="121">Admin_Kab_Topolog</text><text x="1487" y="586" textLength="107">Admin_Kabupaten</text></g>
          <g class="t12"><text x="1619.500" y="439.500" textLength="31" font-weight="bold">Layers</text><text x="1636" y="455.500" textLength="103">Admin_Kab_Topology</text><text x="1653" y="471" textLength="50">Area Errors</text><text x="1653" y="502.500" textLength="48">Line Errors</text><text x="1653" y="534" textLength="53">Point Errors</text><text x="1636" y="566" textLength="86">Admin_Kabupaten</text></g>
          <svg x="1619" y="446" width="11" height="11"><use href="#chk"/></svg><svg x="1619" y="556.500" width="11" height="11"><use href="#chk"/></svg>
          <rect x="1633" y="478.500" width="12.500" height="9" rx="1" fill="#ff7f7f" stroke="#f00" stroke-width="2.600"/><path d="M1632 514.500h14" stroke="#ff7f7f" stroke-width="2"/><path d="M1635.500 542h7v8h-7z" fill="#ff7f7f"/><path d="M1633 573.500h13v9h-13z" fill="#f2dac8" stroke="#888"/>
        </svg>
        <div class="ln seven"><b>7.</b><span data-w="262" class="mix">Start editing dan <u>membuka</u> <u>jendela</u> error editor</span><svg class="ei" viewBox="0 0 26 26"><path d="M0 0h26v26H0z" fill="#f0f0f0"/><path d="M5 5h16v13H5z" fill="#bfe0f8" stroke="#456"/><path d="M5 5h16v3H5z" fill="#2a62b8"/><path d="M8 8v10M8 12h10" stroke="#fff"/><circle cx="16" cy="16.500" r="5.500" fill="#cf2030"/><path d="M14 14.500l4 4M18 14.500l-4 4" stroke="#fff" stroke-width="1.500"/></svg></div>
        <svg class="pic p2" id="mini" viewBox="1414 638 358 90" width="358" height="90"></svg>
        <div class="ln"><b>8.</b><div class="just"><u data-w="57">Menandai</u><u data-w="36">semua</u><u data-w="42">dengan</u><span data-w="29">mark</span><span data-w="11">as</span><span data-w="54">exception</span><u data-w="38">karena</u><u data-w="62">merupakan</u></div></div>
        <div class="ln"><b></b><span class="mix" data-w="171"><u>pinggiran</u> <u>poligon</u> batas admin</span></div>
        <div class="ln"><b>9.</b><span data-w="10">A</span></div>
        <div class="ln"><b>10.</b><span data-w="10">A</span></div>
        <div class="ln"><b>11.</b><span data-w="10">A</span></div>
        <div class="ln"><b>12.</b><span data-w="10">A</span></div>
        <div class="ln"><b>13.</b><span data-w="10">A</span></div>
      </div>
    </div>
  </div>
  <footer class="wstat">
    <span class="pg" data-w="67">Page 5 of 9</span>
    <svg class="fi" viewBox="0 0 18 20"><path d="M5 1H1v4M13 1h4v4M1 15v4h4M17 15v4h-4" fill="none" stroke="#333"/><path d="M4.500 4h6l3.500 3.500V16H4.500zM10 4v4h4" fill="none" stroke="#222" stroke-width="1.300"/></svg><span data-w="33">Focus</span>
    <span class="v v1"><svg viewBox="0 0 18 18"><path d="M1 2h6l2 1.500L11 2h6v13h-6l-2 1.500L7 15H1zM9 3.500v13M3 5h4M3 8h4M3 11h4M11 5h4M11 8h4M11 11h4" fill="none" stroke="#333" stroke-width="1.200"/></svg></span><span class="v v2"><svg viewBox="0 0 18 18"><path d="M3 1h12v16H3zM5 4h8M5 6.500h8M5 9h8M5 11.500h8M5 14h8" fill="none" stroke="#222" stroke-width="1.300"/></svg></span><span class="v v1"><svg viewBox="0 0 18 18"><path d="M8 16H1V1h15v6M3 4h11M3 7h7M3 10h4M3 13h3" fill="none" stroke="#444" stroke-width="1.200"/><circle cx="12.500" cy="12.500" r="4.700" fill="#f5f5f5" stroke="#333" stroke-width="1.200"/><path d="M8 11h9M8 14h9M12.500 8v9" stroke="#333" fill="none"/><ellipse cx="12.500" cy="12.500" rx="2" ry="4.500" fill="none" stroke="#333"/></svg></span>
    <svg class="zs" viewBox="0 0 160 20"><path d="M1 9.500h10M17 10.500h125M147 9.500h11M152.500 4v11M79.500 6v9" stroke="#555" stroke-width="1.200"/><path d="M57 2h6v17h-6z" fill="#666"/></svg>
    <span class="pc" data-w="24">70%</span>
  </footer>
</section>

<footer class="taskbar">
  <div class="apps">
    <span><svg viewBox="0 0 30 30"><path d="M0 0h14.300v14H0zM15.300 0h14.300v14H15.300zM0 15h14.300v14.500H0zM15.300 15h14.300v14.500H15.300z" fill="url(#gb)"/></svg></span>
    <span class="run"><svg viewBox="0 0 30 30"><path d="M0 3c0-1 .5-1.500 1.500-1.500h8L13 5v5H0z" fill="#e09f10"/><path d="M0 7h12l3-2.500h15V28H0z" fill="#ffcf48"/><path d="M5 28v-5c0-1.500 1-2.500 2.500-2.500h15c1.500 0 2.500 1 2.500 2.500v5z" fill="#1274c4"/><path d="M9 24.500h12" stroke="#0a4a86" stroke-width="1.300"/></svg></span>
    <span class="run"><svg viewBox="0 0 36 34"><g transform="translate(0 4)"><circle cx="15" cy="15" r="15" fill="#fbc21c"/><path d="M15 15L2 7.500A15 15 0 0 1 28 7.500z" fill="#e33b2e"/><path d="M15 15H15L2 7.500A15 15 0 0 0 14 30l7-12z" fill="#2a9b48"/><circle cx="15" cy="15" r="7.300" fill="#fff"/><circle cx="15" cy="15" r="5.800" fill="#2f77ea"/></g><circle cx="26" cy="10" r="9.800" fill="#1f6f86"/><path d="M19 6c4-4 9-2 9 1s-5 2-6 5M27 14c2-3 5-3 6-1" stroke="#4a9aa0" fill="none" stroke-width="1.500"/></svg></span>
    <span><svg viewBox="0 0 30 30"><path d="M15 29C7 29 1 23 1 15.500 1 11 3 8 5.500 5c0 2 .5 3 1.500 3.500C9 7 11 7.500 13 8c2-1 4-4 5.500-8 1 3 4 4 6 7 4 4 4.500 7 4.500 9C29 23 23 29 15 29z" fill="url(#gf)"/><path d="M10 10c3-1 8-1.500 10 2s0 9-5 9.500-7-4-6-7c2 1 3 0 5-1-2 0-3-1.500-4-3.500z" fill="#7a3fe0"/></svg></span>
    <span><svg viewBox="0 0 30 30"><path d="M0 15C0 6 7 0 15 0s15 6 15 12c0 5-4 8-8 8-3 0-5-1-4-3 2-4-1-8-6-8C6 9 1 12 0 15z" fill="url(#ge)"/><path d="M0 15c0-5 5-8 10-7-3 3-4 8-1 13 3 4 10 5 17 2-3 5-7 7-11 7C7 30 0 24 0 15z" fill="#1466b8"/><path d="M11 10c-4 4-3 11 4 14 4 1.500 8 1 12-2-2 5-7 8-11 8-7-2-13-12-5-20z" fill="#0c4f99"/></svg></span>
    <span class="run"><svg viewBox="0 0 30 30"><path d="M7 1h23v7H7z" fill="#41a5ee"/><path d="M7 8h23v7H7z" fill="#2b7cd3"/><path d="M7 15h23v6H7z" fill="#185abd"/><path d="M7 21h23v7H7z" fill="#103f91"/><path d="M0 7h16v16H0z" fill="#1450a8"/><path d="M3.500 11l2.200 8L8 12.500l2.300 6.500 2.200-8" fill="none" stroke="#fff" stroke-width="1.800"/></svg></span>
    <span class="run act"><svg><use href="#arc"/></svg></span>
  </div>
  <div class="tray">
    <svg class="y1" viewBox="0 0 14 9"><path d="M1 8l6-6 6 6" fill="none" stroke="#fff" stroke-width="2"/></svg>
    <svg class="y2" viewBox="0 0 20 16"><path d="M5 14a4 4 0 0 1-1-8 6 6 0 0 1 11-1 4.500 4.500 0 0 1 1 9z" fill="#777"/><path d="M2 1l16 15" stroke="#eee" stroke-width="1.400"/></svg>
    <svg class="y3" viewBox="0 0 20 16"><path d="M1 6a13 13 0 0 1 18 0M4 9a9 9 0 0 1 12 0M6.500 11.800a5 5 0 0 1 7 0" fill="none" stroke="#fff" stroke-width="1.500"/><circle cx="10" cy="14" r="1.500" fill="#fff"/></svg>
    <svg class="y4" viewBox="0 0 20 16"><path d="M1 5.500h3l4-4v13l-4-4H1z" fill="none" stroke="#fff" stroke-width="1.300"/><path d="M11 5a4 4 0 0 1 0 6" fill="none" stroke="#fff" stroke-width="1.200"/><path d="M13.500 3a7 7 0 0 1 0 10M16 1.500a10 10 0 0 1 0 13" fill="none" stroke="#777"/></svg>
    <svg class="y5" viewBox="0 0 20 18"><path d="M7 3h10v3l1.500 1-3 8H2l3-8 3-4M1 5h5M3 1v4" fill="none" stroke="#fff" stroke-width="1.500"/><path d="M8 6h7l-2 6H5z" fill="#fff"/><circle cx="15.500" cy="13.500" r="3.500" fill="#fff"/></svg>
    <div class="clock"><span data-w="36">11:46</span><span data-w="77">06/05/2025</span></div>
  </div>
</footer>
</main>
<script src="main.js"></script>
</body>
</html>
```

FILE: styles.css
```css
*{box-sizing:border-box}
body{margin:0;width:1920px;height:1080px;overflow:hidden;font:16px/20px "Open Sans","Noto Sans",sans-serif;color:#1a1a1a}
ul,p,h4{margin:0;padding:0;list-style:none}
.sprite{position:absolute;width:0;height:0}
[data-w]{display:inline-block;white-space:nowrap;transform-origin:0 50%;flex:none}
svg{flex:none}
.desktop{position:relative;width:1920px;height:1080px;background:radial-gradient(circle at 1200px 20px,#1b2a12,transparent 300px),linear-gradient(90deg,#0a0c05,#0d1006 60%,#090b04)}
.window{position:absolute;overflow:hidden;display:flex;flex-direction:column}

/* Map application */
.arcmap{left:0;top:6px;width:1279px;height:997px;border-radius:9px;background:#f0f0f0}
.titlebar{height:38px;flex:none;display:flex;align-items:center;background:#f3f3f3;padding:0 23px 0 10px}
.titlebar .app{width:20px;height:22px;margin-right:6px}
.winbtns{margin-left:auto;display:flex;gap:45px;align-items:center}
.winbtns svg{width:14px;height:14px}
.menu{height:32px;flex:none;display:flex;gap:20px;padding-left:15px;align-items:center;background:linear-gradient(90deg,#f0f0f0,#fafafa)}
.menu [data-w="24"]{margin-left:1px}
.bars{height:97px;flex:none;display:flex;flex-direction:column;gap:2px;background:linear-gradient(90deg,#f0f0f0,#fafafa)}
.barrow{height:30.600px;display:flex;gap:4px;padding-left:4px}
.tb{display:flex;align-items:center;height:30.600px;flex:none;border-radius:4px;background:linear-gradient(#fdfdfd,#eee)}
.i{width:27.400px;height:22px;flex:none}
.gr{width:9px;height:20px;flex:none;background:radial-gradient(circle,#aaa 1.200px,transparent 1.500px) 1px 0/6px 5px repeat-y}
.sp{width:8px;height:18px;flex:none;background:linear-gradient(90deg,transparent 4px,#bbb 4px,#bbb 5px,transparent 5px)}
.ca{width:12px;height:5px;flex:none;background:#111;clip-path:polygon(2px 0,10px 0,6px 5px)}
.ca.off{background:#aaa}
.g{flex:1}
.ov{width:14px;height:31px;background:linear-gradient(#eee,#c4c4c4);border-radius:2px}
.on{display:flex;align-items:center;justify-content:center;width:28px;height:28px;flex:none;border:1.500px solid #1c87e0;background:#dcebf7}
.t-std{width:771px}.t-edit{width:240px}.t-class{width:200px}.t-end{width:52px}
.t-std .on{margin:0 -1px}
.t-tools{width:641px}.t-tools .gr{width:7.600px}.t-geo{width:376px}.t-topo{width:250px}
.t-editor{width:516px}.t-draw{width:698px}
.lb{margin-left:6px}
.t-class .lb{margin-left:5px}
.combo{display:flex;align-items:center;height:26px;background:#fff;border:1.500px solid #999;border-radius:2px;padding:0 5px 2px 4px;flex:none}
.cv{width:12px;height:8px;margin-left:auto;color:#888}
.scale{width:186px}
.font{width:213px;padding-left:0;margin-left:4px}.size{width:57px;margin-left:1px}
.font .i{width:24px}
.nudge{margin-left:3px}
.serif{font:bold 22px/22px "Liberation Serif",serif;text-align:center}
.biu{font:bold 17px/22px "Liberation Serif",serif;text-align:center}
.it{font-style:italic}.un{text-decoration:underline}
.classic{display:flex;align-items:center;background:#fff;border:2px solid #777;border-right-color:#ddd;border-bottom-color:#ddd}
.classic b{margin-left:auto;width:20px;height:100%;background:#f0f0f0;border:1px solid #fff;border-right:1px solid #777;border-bottom:1px solid #777}
.classic b::after{content:"";display:block;width:10px;height:5px;margin:7px auto 0;background:#000;clip-path:polygon(0 0,100% 0,50% 100%)}
.t-topo .classic{width:223px;height:24px}
.t-topo .i{width:25px}
.work{height:516px;flex:none;display:flex}
.toc{width:302px;flex:none;display:flex;flex-direction:column;margin-right:6px}
.toc header,.inspector header{height:25px;flex:none;display:flex;align-items:center;background:linear-gradient(90deg,#bfcddb,#d7e4f2);padding-left:6px}
.pn{width:10px;height:13px;margin-left:auto;margin-right:9px}
.px{width:12px;height:12px;margin-right:5px;color:#111;--sw:2}
.toctools{height:32px;flex:none;display:flex;align-items:center;padding-left:5px;background:linear-gradient(#fcfcfc,#eee)}
.tree{flex:1;border:1.500px solid #8a919b;background:#fff;padding-top:1px}
.tree li{height:22.550px;display:flex;align-items:center}
.mn{width:12px;height:12px}
.d0{padding-left:10px}.d0 .mn{margin-top:3px}.d1{padding-left:34px}.d2{padding-left:73px}.d3{padding-left:103px}
.ly{width:21px;height:19px;margin:0 6px 0 7px}
.ck{width:14px;height:14px;margin-left:9px}
.nm{margin-left:9px}
.nm.sel{margin-left:7px;padding:1px 2px;height:22px;background:#0078d7;color:#fff}
.sw{display:block}
.area{width:21px;height:16px;background:#ff7f7f;border:4px solid #f00;border-radius:3px}
.sw.ln{width:21px;height:4px;background:#ff7f7f;border-radius:2px}
.pt{width:12px;height:12px;background:#ff7f7f;margin-left:4px}
.poly{width:19px;height:14px;background:#f2dac8;border:1px solid #777;margin-left:1px}
.mapframe{width:943px;flex:none;display:flex;flex-direction:column;border:2px solid #6e6e6e;border-right:1px solid #ddd;border-bottom:1px solid #ddd}
.mapmid{display:flex;height:492px;flex:none}
.map{display:block;background:#fff}
.vs{flex:1;display:flex;justify-content:center;padding-top:22px;border-left:1px solid #ddd}
.vs i{width:2.500px;height:447px;background:#888;border-radius:2px}
.mapfoot{flex:1;display:flex;align-items:center;background:#f0f0f0}
.vb{width:21px;height:19px;display:flex;align-items:center;justify-content:center}
.vb.on{background:#cde6fb;border:1px solid #bcdcf8;border-radius:3px}
.vb svg{width:11px;height:13px}
.fsep{width:1px;height:17px;background:#999;margin:0 5px 0 4px}
.hs{width:780px;height:2.500px;background:#888;margin-left:21px;border-radius:2px}
.dock{padding:3px 0 0 3px;display:flex;flex-direction:column;flex:1;background:#fbfbfb}
.dt{height:89px;width:25px;border:1.500px solid #b4b4b4;border-radius:5px 0 0 5px;background:#f3f3f3;writing-mode:vertical-rl;display:flex;align-items:center;color:#777;padding-top:4px}
.dt+.dt{height:86px}
.dt .i{width:22px;height:22px}
.dt span{margin-top:4px;font-size:15.500px;letter-spacing:.2px}

/* Error inspector */
.inspector{height:249px;margin-top:6px;flex:none;width:1251px;display:flex;flex-direction:column}
.inspector header{background:linear-gradient(90deg,#99b4d1,#b9d1ea);padding-left:5px}
.showrow{display:flex;align-items:center;height:39px;padding:2px 0 0 5px;overflow:hidden;flex:none}
.showrow .classic{width:467px;height:25px;padding-left:6px;margin-left:37px;margin-top:-3px;flex:none}
.cnt{margin-left:20px}
.btn{width:127px;height:26px;border:1px solid #ccc;border-radius:4px;background:#fdfdfd;margin-left:72px;display:flex;align-items:center;justify-content:center;flex:none}
.cb{width:17px;height:17px;margin:-3px 3px 0 26px}
.showrow .ext{margin-left:255px}
.gridbox{margin-left:6px;height:181px;flex:none;border:1.500px solid #8a919b;background:#fff;display:flex}
.tbl{width:1222px;padding-left:2px;overflow:hidden}
.row{display:grid;grid-template-columns:183px 187.500px 187.500px 125px 93.500px 94px 1fr;height:23.800px;border-bottom:1px solid #f0f0f0;margin-left:4px}
.row>span{border-right:1px solid #e6e6e6;padding-left:3px;display:flex;align-items:center}
.row>span+span{padding-left:7.500px}
.row>span:last-child{border:0}
.row.hd{height:32px;border:0}
.pick{background:#0078d7;color:#fff;outline:1px dotted #e08a3a;outline-offset:-1px}
.row:nth-child(2){height:24px}
.gs{width:20px;margin-top:3px;background:#f0f0f0;display:flex;justify-content:center}
.gs i{width:2.500px;height:23px;background:#888;margin-top:20px}
.low{margin-top:3px;flex:none}
.t-page{width:472px}.t-page .gr{width:8px}.t-ga{width:213px}.t-top2{width:560px}
.t-ga .lb,.t-page .lb{margin-left:5px}
.t-top2 .gr{width:7px}
.name{width:154px;margin:0 1px;border-color:#bbb;padding-left:2px}
.name em{width:127px;height:22px;background:#f0f0f0;font-style:normal;display:flex;color:#2b5f9c}
.name em span{background:#0078d7;height:21px}
.name .cv{color:#bbb}
.dim{color:#bbb}.err{color:#111}
.status{flex:1;display:flex;align-items:center;padding:0 0 2px 4px}
.coord{margin-left:835px}

/* Context menu and tooltip */
.ctx{position:absolute;left:930px;top:626px;width:245px;height:208px;border:1.500px solid #777;background:linear-gradient(90deg,#f2f2f2 32px,#fdfdfd 33px);box-shadow:4px 4px 4px #0006;padding:1px}
.ctx li{height:27.500px;padding-left:41.500px;display:flex;align-items:center}
.ctx .hr{height:1px;background:#bbb;margin:1.500px 0 1.500px 42px;padding:0}
.ctx .hot{background:#b3d6f2;border:1.500px solid #2a8ee0;height:27px;padding-left:40.500px}
.ctx .dis{color:#aaa}
.tip{position:absolute;left:1008px;top:824px;width:257px;height:183px;border:1px solid #767676;background:linear-gradient(#fff,#c9d8ef);box-shadow:3px 3px 4px #0006;color:#575757;padding:7px 0 0 5px;border-radius:2px}
.tip p{margin:11px 0 0 10px;line-height:18.850px}
.tip p span{line-height:18.850px;vertical-align:top}

/* Word processor */
.word{left:1286px;top:0;width:628px;height:1020px;border:1px solid #888;border-radius:10px;background:#efefef;font-size:17px}
.wtitle{height:60px;flex:none;background:#185abd;color:#8fb0e0;display:flex;align-items:center;font-size:15.500px;padding:0 0 0 19px}
.wi{width:21px;height:20px;opacity:.75}
.as{margin-left:20px}
.tog{width:53px;height:25px;border:1.500px solid #8fb0e0;border-radius:13px;margin-left:8px;display:flex;align-items:center;padding-left:3px}
.tog i{width:18px;height:18px;border-radius:9px;background:#7ba2dc;margin-right:7px}
.qq{width:10px;height:8px;margin-left:22px}
.dn{margin-left:30px}
.dc{width:13px;height:9px;margin-left:7px}
.sr{width:18px;height:18px;margin-left:60px;margin-right:7px}
.wb{width:14px;height:14px;margin-left:46px}
.tabs{height:38px;flex:none;display:flex;align-items:center;font-size:18px;color:#333}
.tabs>span{height:29px;margin-top:-2px;display:flex;align-items:center;justify-content:center;border-left:1px solid #ccc;overflow:hidden;padding-top:2px}
.tabs>.file{width:51px;border:0;padding-left:25px;margin-right:18px}
.tabs>.cur{width:61px;border:0;height:35px;margin-top:4px;padding:0 2px 5px 4px;background:linear-gradient(#1a4fa5,#1a4fa5) 8px 30px/47px 3px no-repeat}
.w54{width:53px}.w51{width:51px}.w63{width:63px}.w95{width:95px}.w75{width:75px}
.tabs>.w52{width:52px;justify-content:flex-start;padding-left:6px}
.tabs>.more{width:30px;height:38px;margin:0;background:#fff;border:1px solid #777;padding:0}
.more svg{width:9px;height:9px}
.ribbon{height:124px;margin:0 9px;flex:none;background:#fff;border-radius:8px 8px 0 0;display:flex;border-bottom:1px solid #ccc;font-size:16px}
.grp{height:111px;margin-top:6px;border-right:1px solid #ccc;display:flex;flex-direction:column;justify-content:space-between}
.clip{width:109px}.g69{width:69px}.g89{width:89px}.g73{width:72px}.g68{width:69px}.g77{width:77px}
.big{display:flex;flex-direction:column;align-items:center;gap:3px;padding-top:1px}
.big.lo{padding-top:4px}
.big [data-w]{line-height:20px}
.c{width:9px;height:6px;margin-top:2px;color:#222;--cw:2}
.two{display:flex}
.two .big{width:61px;margin-left:14px;padding-top:4px;gap:4px}
.two .big span{margin-left:-2px}
.mini{display:flex;flex-direction:column;gap:12px;padding-top:3px;margin-left:0}
.mini svg{width:20px;height:20px}
.grp footer{display:flex;justify-content:center;align-items:center;gap:9px;font-size:15px;margin-bottom:-5px;height:20px}
.clip footer{justify-content:flex-start;padding-left:17px;gap:18px}
.g73 footer{gap:15px;padding-left:4px}
.la{width:11px;height:11px}
.fold{width:13px;height:9px;margin:103px 12px 0 auto;color:#222}
.msg{height:122px;margin:0 9px;flex:none;background:#fef9d3;border-radius:0 0 8px 8px;display:flex;align-items:center;font-size:16px;padding-left:15px}
.inf{width:20px;height:20px}
.mt{width:123px;margin-left:10px}
.ml{width:124px;margin-left:16px}
.ml u{text-decoration-thickness:1px;text-underline-offset:3px}
.mb{height:32px;border:1px solid #777;border-radius:4px;background:#fff;display:flex;align-items:center;justify-content:center}
.m1{width:93px;margin-left:15px}.m2{width:139px;margin-left:11px}
.mx{width:14px;height:14px;margin-left:15px;color:#222}
.ruler,.vruler{display:block}
.ruler text,.vruler text{font:14px "Open Sans",sans-serif;fill:#555;text-anchor:middle}
.docarea{height:617px;flex:none;display:flex;border-top:1px solid #ccc}
.page{width:577px;height:596px;background:#fff;border-left:1px solid #ccc;padding-left:63px}
.cell{width:438px;height:532px;border:1.500px solid #000;border-top:0;padding:0 5px 0 11px;font:15.700px/24px "Liberation Serif",serif;color:#000}
.cell .ln{height:24.100px;display:flex;align-items:center}
.cell .ln b{font-weight:normal;width:22px;white-space:nowrap;flex:none;letter-spacing:-.6px}
.just{flex:1;display:flex;justify-content:space-between}
.cell u{text-decoration:underline wavy #e02020 1px;text-underline-offset:1px;text-decoration-skip-ink:none}
.pic{display:block;margin-left:22px}
.p1{margin-top:1px}
.t16{font:15px "Open Sans",sans-serif;fill:#222}.t12{font:11px "Open Sans",sans-serif;fill:#222}
.cell .ln.seven{height:32px;align-items:flex-end;margin-top:7px}
.ei{width:26px;height:26px;margin:0 0 7px 5px}
.p2{margin-top:4px;margin-bottom:7px}
.wstat{flex:1;display:flex;align-items:center;background:#f5f5f5;border-top:1px solid #ccc;font-size:15px;padding-left:14px}
.fi{width:18px;height:19px;margin:0 3px 0 91px}
.v{width:50px;height:27px;display:flex;align-items:center;justify-content:center}
.v svg{width:19px;height:19px}
.v2{background:#dedede}
.wstat .v:nth-of-type(3){margin-left:13px}
.zs{width:160px;height:20px;margin-left:6px}
.pc{margin-left:13px}

/* Taskbar */
.taskbar{position:absolute;left:0;top:1020px;width:1920px;height:60px;border-top:1px solid #3a3b34;background:#0d0e05;display:flex;color:#fff}
.apps{display:flex;margin-left:770px;padding-top:4px;gap:5.200px}
.apps span{width:50px;height:50px;border-radius:5px;display:flex;align-items:center;justify-content:center;position:relative}
.apps svg{width:30px;height:30px}
.apps span:nth-child(3) svg{width:36px;height:34px;margin:-5px 0 0 5px}
.apps .run::after{content:"";position:absolute;bottom:1px;left:21px;width:8px;height:4px;border-radius:2px;background:#999}
.apps .act{background:#23241d;border:1px solid #33342d}
.apps .act::after{left:14px;width:20px;background:#4cc2ff;bottom:0}
.tray{margin-left:auto;margin-right:24px;display:flex;align-items:center;padding-bottom:2px}
.y1{width:14px;height:9px;margin-right:23px}
.y2{width:21px;height:17px;margin-right:19px}
.y3{width:21px;height:17px;margin-right:9px}
.y4{width:20px;height:17px;margin-right:10px}
.y5{width:21px;height:19px;margin-right:20px}
.clock{display:flex;flex-direction:column;align-items:flex-end;font-size:16px;line-height:20px}
```

FILE: main.js
```js
// Labels carry their set width; squeeze each one horizontally to fit it.
document.querySelectorAll('[data-w]').forEach(function (el) {
  var want = +el.dataset.w, has = el.offsetWidth;
  if (!has) return;
  el.style.transform = 'scaleX(' + (want / has) + ')';
  el.style.marginRight = (want - has) + 'px';
});

// Horizontal ruler
(function () {
  var s = '<path d="M1387 348h422v19h-422z" fill="#fff"/><path d="M1316 345v29" stroke="#ddd"/>' +
    '<path d="M1297 357v7h6" fill="none" stroke="#444" stroke-width="3"/>';
  for (var k = -8; k < 64; k++) {
    var x = 1386.5 + k * 8.26;
    if (x > 1909) break;
    var m = ((k % 4) + 4) % 4, n = k / 4;
    if (m === 0 && n >= 1 && n <= 12) { s += '<text x="' + x + '" y="364">' + n + '</text>'; continue; }
    if (k === 0) continue;
    s += m === 2 ? '<path d="M' + x + ' 355v8" stroke="#666"/>' : '<path d="M' + x + ' 358.500v2" stroke="#666"/>';
  }
  s += '<path d="M1375 353h9v11h-9zM1811 353h9v11h-9z" fill="#999"/>' +
    '<g fill="#fff" stroke="#777"><path d="M1385.500 347.500h13v4l-6.500 5-6.500-5z"/><path d="M1406.500 374v-5h13v5zM1406.500 369v-3l6.500-6 6.500 6v3z"/><path d="M1804.500 367.500v-3l6.500-5 6.500 5v3z"/></g>';
  document.getElementById('hruler').innerHTML = s;
})();

// Vertical ruler
(function () {
  var s = '<path d="M1290 375h19v524h-19zM1290 909h19v17h-19z" fill="#fbfbfb"/>';
  for (var k = 0; k < 76; k++) {
    var y = 376 + k * 8.27;
    if (y > 988) break;
    var m = k % 4, n = 6 + k / 4;
    if (m === 0 && n <= 21) s += '<text transform="translate(1305 ' + y + ') rotate(-90)">' + n + '</text>';
    else s += m === 2 ? '<path d="M1298 ' + y + 'h6" stroke="#555"/>' : '<path d="M1300.500 ' + y + 'h2" stroke="#666"/>';
  }
  document.getElementById('vruler').innerHTML = s;
})();

// Small inspector picture in the document
(function () {
  function t(x, y, w, v) { return '<text x="' + x + '" y="' + y + '" textLength="' + w + '">' + v + '</text>'; }
  var s = '<rect x="1414" y="638" width="358" height="90" fill="#f0f0f0"/><rect x="1414" y="638" width="358" height="9" fill="#a4bfdc"/>' +
    '<rect x="1442" y="650" width="171" height="8.500" fill="#fff" stroke="#888" stroke-width=".7"/><path d="M1608 653h4l-2 2.500z"/>' +
    '<rect x="1668" y="650" width="46" height="9" rx="1" fill="#fff"/><rect x="1725" y="651" width="5.500" height="6" fill="#0b63b8"/>' +
    '<rect x="1415" y="661.500" width="358" height="65" fill="#fff" stroke="#aaa" stroke-width=".8"/>' +
    '<g style="font:7px Open Sans,sans-serif" fill="#333">' +
    t(1415, 645.5, 35, 'Error Inspector') + t(1415, 657, 14, 'Show:') + t(1445, 657, 53, '&lt;Errors from all rules&gt;') + t(1621, 657, 21, '36 errors') + t(1677, 657.3, 27, 'Search Now') + t(1731, 657, 14, 'Errors') +
    t(1419, 670, 23, 'Rule Type') + t(1488, 670, 16, 'Class 1') + t(1557, 670, 16, 'Class 2') + t(1626, 670, 15, 'Shape') + t(1672, 670, 22, 'Feature 1') + t(1706, 670, 23, 'Feature 2') + t(1741, 670, 24, 'Exception');
  for (var i = 0; i < 6; i++) {
    var y = 680.3 + i * 8.75;
    s += t(1419, y, 50, 'Must Not Have Gaps') + t(1488, y, 45, 'Admin_Kabupaten') + t(1626, y, 20, 'Polyline') + t(1672, y, 3.5, '0') + t(1706, y, 3.5, '0') + t(1741, y, 12, 'False');
    s += '<path d="M1416 ' + (y + 2.3) + 'h356" stroke="#eee" stroke-width=".6"/>';
  }
  document.getElementById('mini').innerHTML = s + '</g>';
})();

document.querySelectorAll('text[textLength]').forEach(function (el) { el.setAttribute('lengthAdjust', 'spacingAndGlyphs'); });
```
